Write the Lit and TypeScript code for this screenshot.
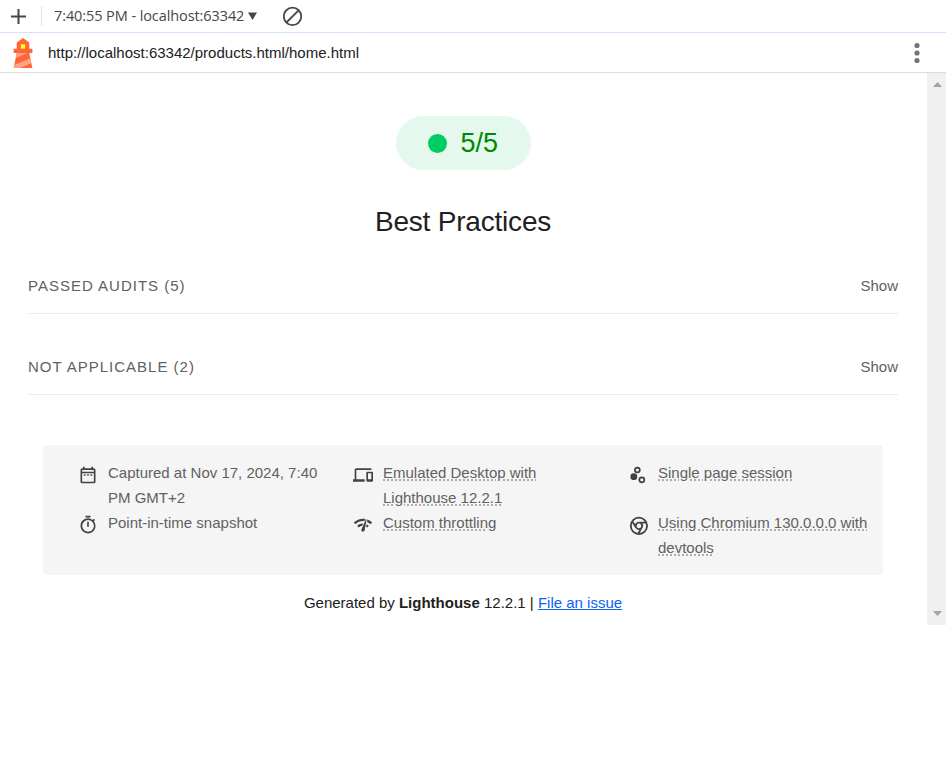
import { LitElement, html, css, svg } from "lit";
import { customElement } from "lit/decorators.js";

const icons = {
  date: svg`<path d="M7 11h2v2H7v-2zm14-5v14c0 1.1-.9 2-2 2H5a2 2 0 01-2-2L3.01 6c0-1.1.88-2 1.99-2h1V2h2v2h8V2h2v2h1c1.1 0 2 .9 2 2zM5 8h14V6H5v2zm14 12V10H5v10h14zm-4-7h2v-2h-2v2zm-4 0h2v-2h-2v2z"/>`,
  devices: svg`<path d="M4 6h18V4H4c-1.1 0-2 .9-2 2v11H0v3h14v-3H4V6zm19 2h-6c-.55 0-1 .45-1 1v10c0 .55.45 1 1 1h6c.55 0 1-.45 1-1V9c0-.55-.45-1-1-1zm-1 9h-4v-7h4v7z"/>`,
  session: svg`<circle cx="7" cy="14" r="4.1"/><g fill="none" stroke="currentColor" stroke-width="2.1"><circle cx="11.2" cy="5.9" r="2.9"/><circle cx="16.6" cy="17.8" r="3"/></g>`,
  stopwatch: svg`<path d="M15 1H9v2h6V1zm-4 13h2V8h-2v6zm8.1-6.6L20.5 6l-1.4-1.4L17.7 6A9 9 0 0 0 3 13a9 9 0 1 0 16-5.6zm-7 12.6a7 7 0 1 1 0-14 7 7 0 0 1 0 14z"/>`,
  network: svg`<path d="M15.9 5c-.17 0-.32.09-.41.23l-.07.15-5.18 11.65c-.16.29-.26.61-.26.96 0 1.11.9 2.01 2.01 2.01.96 0 1.77-.68 1.96-1.59l.01-.03L16.4 5.5c0-.28-.22-.5-.5-.5zM1 9l2 2c2.88-2.88 6.79-4.08 10.53-3.62l1.19-2.68C9.89 3.84 4.74 5.27 1 9zm20 2l2-2a15.4 15.4 0 00-5.59-3.57l-.53 2.82c1.5.62 2.9 1.53 4.12 2.75zm-4 4l2-2c-.8-.8-1.7-1.42-2.66-1.89l-.55 2.92c.42.27.83.59 1.21.97zM5 13l2 2a7.1 7.1 0 014.03-2l1.28-2.88c-2.63-.08-5.3.87-7.31 2.88z"/>`,
  chrome: svg`<g fill="none" stroke="currentColor" stroke-width="2.2"><circle cx="13.1" cy="13" r="9.8"/><path d="M21.9 9.2H13.1a3.9 3.9 0 0 0-3.4 5.7L5 7.4M9.7 14.9a3.9 3.9 0 0 0 6.8 0L12.2 22.6M16.5 14.9a3.9 3.9 0 0 0-1.2-5.1"/></g>`,
};

const items = [
  { icon: icons.date, text: "Captured at Nov 17, 2024, 7:40 PM GMT+2", tip: false },
  { icon: icons.devices, text: "Emulated Desktop with Lighthouse 12.2.1", tip: true },
  { icon: icons.session, text: "Single page session", tip: true },
  { icon: icons.stopwatch, text: "Point-in-time snapshot", tip: false },
  { icon: icons.network, text: "Custom throttling", tip: true },
  { icon: icons.chrome, text: "Using Chromium 130.0.0.0 with devtools", tip: true },
];

const clumps = ["Passed audits (5)", "Not applicable (2)"];

@customElement("app-root")
export class AppRoot extends LitElement {
  static styles = css`
    :host {
      display: block;
      height: 777px;
      overflow: hidden;
      background: #fff;
      color: #212121;
      font: 15px/25px "Liberation Sans", Arial, sans-serif;
    }
    * { box-sizing: border-box; }
    svg { display: block; flex: none; }
    .toolbar {
      display: flex;
      align-items: center;
      height: 33px;
      border-bottom: 1px solid #d3e3fd;
      color: #474747;
      padding-left: 10px;
    }
    .divider { width: 1px; height: 20px; background: #d3e3fd; margin: 0 12px 0 14px; }
    .pick {
      width: 190px;
      white-space: nowrap;
      font: 14.5px/20px "Open Sans", "Noto Sans", sans-serif;
      letter-spacing: -0.09px;
    }
    .arrow { margin-left: 4px; }
    .clear { margin-left: 26px; }
    .topbar {
      display: flex;
      align-items: center;
      height: 40px;
      border-bottom: 1px solid #dadce0;
      padding: 0 22px 0 8px;
    }
    .url { flex: 1; margin-left: 10px; }
    .view { display: flex; height: 552px; }
    .report { flex: 1; padding: 43px 29px 0 28px; }
    .scrollbar {
      width: 19px;
      background: #f0f0f0;
      display: flex;
      flex-direction: column;
      justify-content: space-between;
      align-items: center;
      padding: 9px 0 9px 1px;
    }
    .gauge {
      display: flex;
      align-items: center;
      width: 135px;
      height: 54px;
      margin: 0 auto;
      padding-left: 32px;
      border-radius: 27px;
      background: #e5f8ee;
      color: #080;
      font-size: 27px;
      line-height: 54px;
    }
    .dot { width: 19px; height: 19px; border-radius: 50%; background: #0c6; margin-right: 14px; }
    .title { text-align: center; font-size: 28px; line-height: 40px; margin-top: 32px; height: 40px; letter-spacing: -0.2px; }
    .clump {
      display: flex;
      justify-content: space-between;
      height: 41px;
      border-bottom: 1px solid #ebebeb;
      color: #616161;
      margin-bottom: 40px;
    }
    .clumps { margin-top: 31px; }
    .name { text-transform: uppercase; letter-spacing: 1px; }
    .meta {
      display: grid;
      grid-template-columns: repeat(3, 275px);
      grid-auto-rows: 50px;
      width: 840px;
      height: 130px;
      margin: 50px 0 0 15px;
      padding: 15px 0 0 35px;
      overflow: hidden;
      border-radius: 4px;
      background: #f5f5f5;
      color: #616161;
    }
    .item { display: flex; gap: 10px; padding-right: 25px; }
    .item svg { margin-top: 5px; fill: #424242; color: #424242; }
    .text { flex: none; width: 220px; }
    .tip {
      text-decoration: underline dotted #adadad 2px;
      text-underline-offset: 1px;
    }
    .foot { text-align: center; margin-top: 15px; }
    .link { color: #0c64f2; text-decoration: underline; }
  `;

  render() {
    return html`
      <div class="toolbar">
        <svg width="17" height="17" viewBox="0 0 17 17" stroke="#474747" stroke-width="2"><path d="M1 8.5h15M8.5 1v15"/></svg>
        <div class="divider"></div>
        <div class="pick">7:40:55 PM - localhost:63342</div>
        <svg class="arrow" width="9" height="8" viewBox="0 0 9 8" fill="#474747"><path d="M0 .5h9L4.5 8z"/></svg>
        <svg class="clear" width="20" height="20" viewBox="0 0 20 20" fill="none" stroke="#474747" stroke-width="1.8"><circle cx="9.5" cy="10.4" r="8.7"/><path d="M3.4 16.5 15.6 4.3"/></svg>
      </div>
      <div class="topbar">
        <svg width="30" height="30" viewBox="0 0 48 48">
          <path d="m14 7 10-7 10 7v10h5v7h-5l5 24H9l5-24H9v-7h5V7Z" fill="#F63"/>
          <path d="M31.561 24H14l-1.689 8.105L31.561 24ZM18.983 48H9l1.022-4.907L35.723 32.27l1.663 7.98L18.983 48Z" fill="#FFA385"/>
          <path fill="#FF3" d="M20.5 10h7v7h-7z"/>
        </svg>
        <div class="url">http://localhost:63342/products.html/home.html</div>
        <svg width="14" height="22" viewBox="0 0 14 22" fill="#757575"><circle cx="7" cy="3.5" r="2.6"/><circle cx="7" cy="11" r="2.6"/><circle cx="7" cy="18.5" r="2.6"/></svg>
      </div>
      <div class="view">
        <div class="report">
          <div class="gauge"><div class="dot"></div>5/5</div>
          <div class="title">Best Practices</div>
          <div class="clumps">
            ${clumps.map((c) => html`<div class="clump"><span class="name">${c}</span><span>Show</span></div>`)}
          </div>
          <div class="meta">
            ${items.map((i) => html`
              <div class="item">
                <svg width="20" height="20" viewBox="0 0 24 24" overflow="visible">${i.icon}</svg>
                <div class="text"><span class=${i.tip ? "tip" : ""}>${i.text}</span></div>
              </div>`)}
          </div>
          <div class="foot">Generated by <b>Lighthouse</b> 12.2.1 | <span class="link">File an issue</span></div>
        </div>
        <div class="scrollbar">
          <svg width="9" height="5" viewBox="0 0 9 5" fill="#a3a3a3"><path d="M0 5h9L4.5 0z"/></svg>
          <svg width="9" height="5" viewBox="0 0 9 5" fill="#a3a3a3"><path d="M0 0h9L4.5 5z"/></svg>
        </div>
      </div>
    `;
  }
}
